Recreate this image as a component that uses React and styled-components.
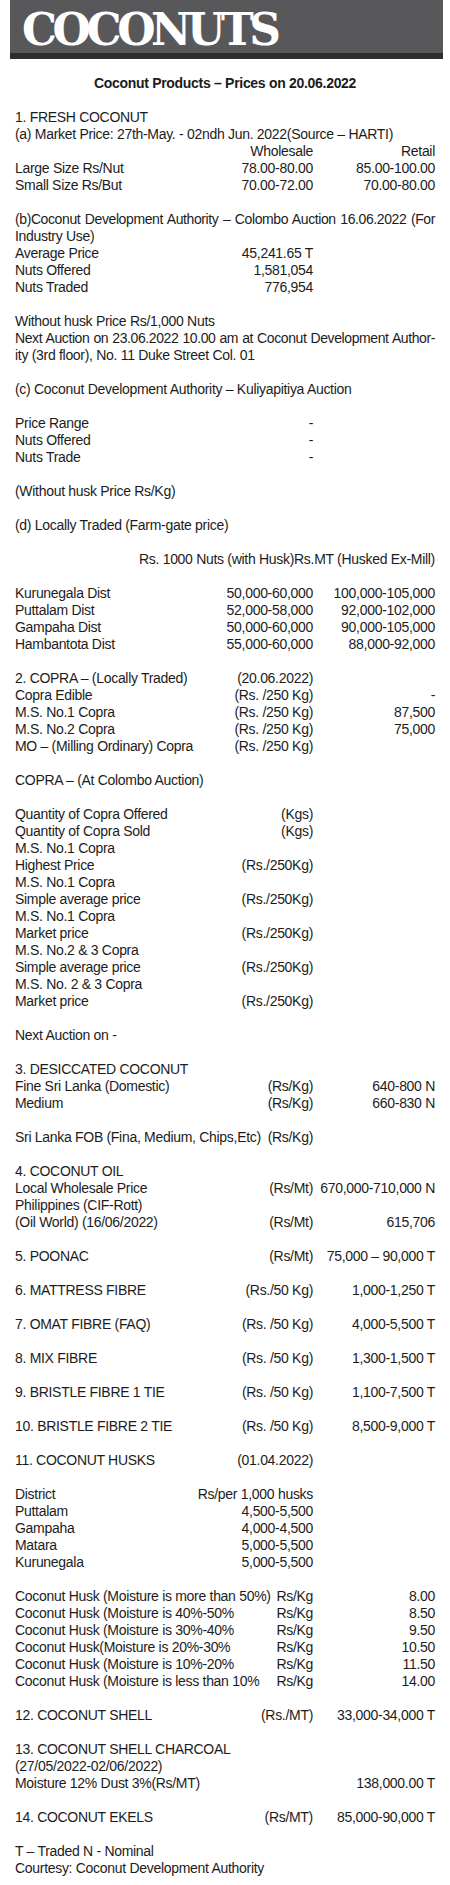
import React from "react";
import styled, { createGlobalStyle } from "styled-components";

const GlobalStyle = createGlobalStyle`
  html, body { margin: 0; padding: 0; background: #ffffff; }
  body {
    font-family: "Liberation Sans", Arial, Helvetica, sans-serif;
    font-size: 14px;
    line-height: 17px;
    letter-spacing: -0.3px;
    color: #1c1c1c;
  }
`;

const Page = styled.div`
  width: 450px;
  min-height: 1885px;
  background: #ffffff;
`;

const Masthead = styled.header`
  margin: 0 7px 0 10px;
  padding: 8px 0 1px 12px;
  background: #58585a;
  border-bottom: 6px solid #2e2e2f;
`;

const MastTitle = styled.h1`
  margin: 0;
  font-family: "DejaVu Serif", "Liberation Serif", serif;
  font-weight: 700;
  font-size: 44px;
  line-height: 44px;
  letter-spacing: -4.4px;
  color: #ffffff;
`;

const Content = styled.main`
  padding: 16px 15px 0 15px;
`;

const Subtitle = styled.h2`
  margin: 0;
  font-size: 14px;
  line-height: 17px;
  font-weight: 700;
  text-align: center;
  letter-spacing: -0.3px;
`;

const Section = styled.section`
  margin-top: 17px;
`;

const Line = styled.div`
  white-space: nowrap;
`;

const Justified = styled.div`
  text-align: justify;
  text-align-last: justify;
  letter-spacing: -0.4px;
`;

const HeadRow = styled.div`
  text-align: right;
  white-space: nowrap;
`;

const Row = styled.div`
  display: grid;
  grid-template-columns: minmax(0, 1fr) auto 122px;
`;

const Label = styled.span`
  white-space: nowrap;
`;

const Unit = styled.span`
  text-align: right;
  white-space: nowrap;
`;

const Value = styled.span`
  text-align: right;
  white-space: nowrap;
`;

const L = (text) => ({ t: "line", text });
const J = (text) => ({ t: "just", text });
const R = (label, unit = "", value = "") => ({ t: "row", label, unit, value });
const H = (text) => ({ t: "head", text });

const sections = [
  [
    L("1. FRESH COCONUT"),
    L("(a) Market Price: 27th-May. - 02ndh Jun. 2022(Source – HARTI)"),
    R("", "Wholesale", "Retail"),
    R("Large Size Rs/Nut", "78.00-80.00", "85.00-100.00"),
    R("Small Size Rs/But", "70.00-72.00", "70.00-80.00"),
  ],
  [
    J("(b)Coconut Development Authority – Colombo Auction 16.06.2022 (For"),
    L("Industry Use)"),
    R("Average Price", "45,241.65 T"),
    R("Nuts Offered", "1,581,054"),
    R("Nuts Traded", "776,954"),
  ],
  [
    L("Without husk Price Rs/1,000 Nuts"),
    J("Next Auction on 23.06.2022 10.00 am at Coconut Development Author-"),
    L("ity (3rd floor), No. 11 Duke Street Col. 01"),
  ],
  [L("(c) Coconut Development Authority – Kuliyapitiya Auction")],
  [R("Price Range", "-"), R("Nuts Offered", "-"), R("Nuts Trade", "-")],
  [L("(Without husk Price Rs/Kg)")],
  [L("(d) Locally Traded (Farm-gate price)")],
  [H("Rs. 1000 Nuts (with Husk)Rs.MT (Husked Ex-Mill)")],
  [
    R("Kurunegala Dist", "50,000-60,000", "100,000-105,000"),
    R("Puttalam Dist", "52,000-58,000", "92,000-102,000"),
    R("Gampaha Dist", "50,000-60,000", "90,000-105,000"),
    R("Hambantota Dist", "55,000-60,000", "88,000-92,000"),
  ],
  [
    R("2. COPRA – (Locally Traded)", "(20.06.2022)"),
    R("Copra Edible", "(Rs. /250 Kg)", "-"),
    R("M.S. No.1 Copra", "(Rs. /250 Kg)", "87,500"),
    R("M.S. No.2 Copra", "(Rs. /250 Kg)", "75,000"),
    R("MO – (Milling Ordinary) Copra", "(Rs. /250 Kg)"),
  ],
  [L("COPRA – (At Colombo Auction)")],
  [
    R("Quantity of Copra Offered", "(Kgs)"),
    R("Quantity of Copra Sold", "(Kgs)"),
    L("M.S. No.1 Copra"),
    R("Highest Price", "(Rs./250Kg)"),
    L("M.S. No.1 Copra"),
    R("Simple average price", "(Rs./250Kg)"),
    L("M.S. No.1 Copra"),
    R("Market price", "(Rs./250Kg)"),
    L("M.S. No.2 & 3 Copra"),
    R("Simple average price", "(Rs./250Kg)"),
    L("M.S. No. 2 & 3 Copra"),
    R("Market price", "(Rs./250Kg)"),
  ],
  [L("Next Auction on -")],
  [
    L("3. DESICCATED COCONUT"),
    R("Fine Sri Lanka (Domestic)", "(Rs/Kg)", "640-800 N"),
    R("Medium", "(Rs/Kg)", "660-830 N"),
  ],
  [R("Sri Lanka FOB (Fina, Medium, Chips,Etc)", "(Rs/Kg)")],
  [
    L("4. COCONUT OIL"),
    R("Local Wholesale Price", "(Rs/Mt)", "670,000-710,000 N"),
    L("Philippines (CIF-Rott)"),
    R("(Oil World) (16/06/2022)", "(Rs/Mt)", "615,706"),
  ],
  [R("5. POONAC", "(Rs/Mt)", "75,000 – 90,000 T")],
  [R("6. MATTRESS FIBRE", "(Rs./50 Kg)", "1,000-1,250 T")],
  [R("7. OMAT FIBRE (FAQ)", "(Rs. /50 Kg)", "4,000-5,500 T")],
  [R("8. MIX FIBRE", "(Rs. /50 Kg)", "1,300-1,500 T")],
  [R("9. BRISTLE FIBRE 1 TIE", "(Rs. /50 Kg)", "1,100-7,500 T")],
  [R("10. BRISTLE FIBRE 2 TIE", "(Rs. /50 Kg)", "8,500-9,000 T")],
  [R("11. COCONUT HUSKS", "(01.04.2022)")],
  [
    R("District", "Rs/per 1,000 husks"),
    R("Puttalam", "4,500-5,500"),
    R("Gampaha", "4,000-4,500"),
    R("Matara", "5,000-5,500"),
    R("Kurunegala", "5,000-5,500"),
  ],
  [
    R("Coconut Husk (Moisture is more than 50%)", "Rs/Kg", "8.00"),
    R("Coconut Husk (Moisture is 40%-50%", "Rs/Kg", "8.50"),
    R("Coconut Husk (Moisture is 30%-40%", "Rs/Kg", "9.50"),
    R("Coconut Husk(Moisture is 20%-30%", "Rs/Kg", "10.50"),
    R("Coconut Husk (Moisture is 10%-20%", "Rs/Kg", "11.50"),
    R("Coconut Husk (Moisture is less than 10%", "Rs/Kg", "14.00"),
  ],
  [R("12. COCONUT SHELL", "(Rs./MT)", "33,000-34,000 T")],
  [
    L("13. COCONUT SHELL CHARCOAL"),
    L("(27/05/2022-02/06/2022)"),
    R("Moisture 12% Dust 3%(Rs/MT)", "", "138,000.00 T"),
  ],
  [R("14. COCONUT EKELS", "(Rs/MT)", "85,000-90,000 T")],
  [L("T – Traded N - Nominal"), L("Courtesy: Coconut Development Authority")],
];

function Item({ item }) {
  switch (item.t) {
    case "line":
      return <Line>{item.text}</Line>;
    case "just":
      return <Justified>{item.text}</Justified>;
    case "head":
      return <HeadRow>{item.text}</HeadRow>;
    default:
      return (
        <Row>
          <Label>{item.label}</Label>
          <Unit>{item.unit}</Unit>
          <Value>{item.value}</Value>
        </Row>
      );
  }
}

export default function App() {
  return (
    <>
      <GlobalStyle />
      <Page>
        <Masthead>
          <MastTitle>COCONUTS</MastTitle>
        </Masthead>
        <Content>
          <Subtitle>Coconut Products – Prices on 20.06.2022</Subtitle>
          {sections.map((items, i) => (
            <Section key={i}>
              {items.map((item, j) => (
                <Item key={j} item={item} />
              ))}
            </Section>
          ))}
        </Content>
      </Page>
    </>
  );
}
